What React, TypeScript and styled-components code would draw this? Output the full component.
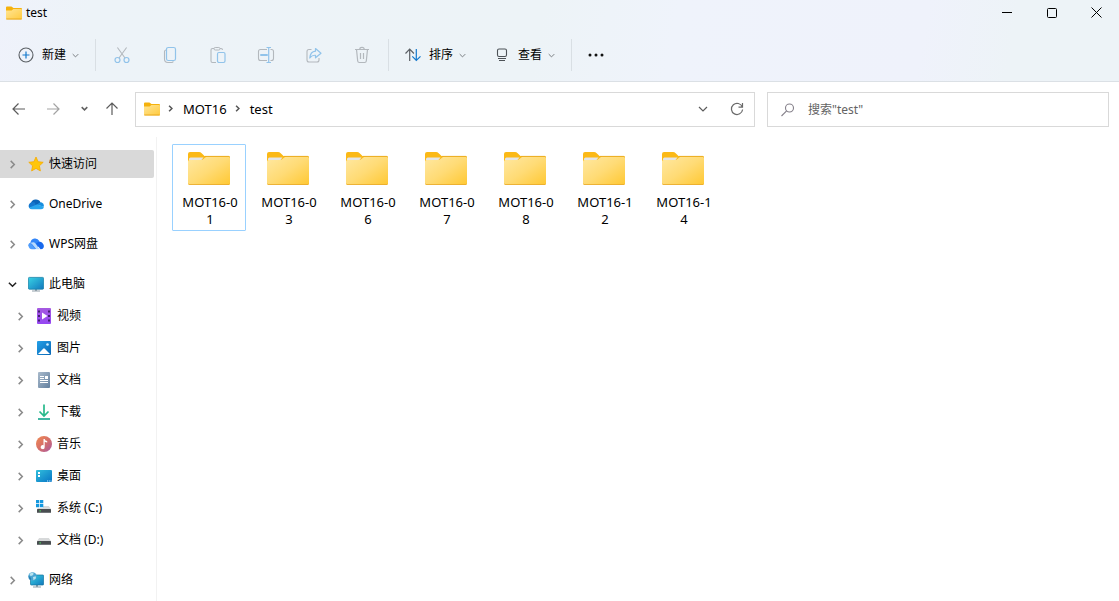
import React from "react";
import styled, { createGlobalStyle, css } from "styled-components";

const GlobalStyle = createGlobalStyle`
  * { box-sizing: border-box; }
  body {
    margin: 0;
    background: #fff;
    color: #000;
    font: 12px/16px "Noto Sans", "Noto Sans CJK SC", sans-serif;
  }
  button, input { font: inherit; color: inherit; }
  svg { display: block; flex: none; }
`;

const Window = styled.div`
  display: flex;
  flex-direction: column;
  min-height: 100vh;
  background: #fff;
`;

const Header = styled.header`
  background: linear-gradient(100deg, #eff2fb 0, #edf3f8 8%, #edf3f7 48%, #eff3fb 60%, #eff2fb 82%, #edf3f7 90%);
  border-bottom: 1px solid #dbe0e5;
`;

const TitleBar = styled.div`
  display: flex;
  align-items: center;
  gap: 4px;
  height: 25px;
  padding-left: 6px;
`;

const Title = styled.h1`
  flex: 1;
  margin: 0;
  font-size: 12px;
  font-weight: 400;
`;

const PlainButton = styled.button`
  display: flex;
  align-items: center;
  justify-content: center;
  flex: none;
  padding: 0;
  border: 0;
  background: transparent;
`;

const WindowButton = styled(PlainButton)`
  width: 45px;
  height: 25px;
`;

const WindowControls = styled.div`
  display: flex;
`;

const Toolbar = styled.div`
  display: flex;
  align-items: center;
  height: 52px;
  margin-top: 4px;
  padding-left: 3px;
`;

const MenuButton = styled(PlainButton)`
  gap: 6px;
  height: 32px;
  padding: 0 14px;
`;

const MenuText = styled.span`
  margin-left: 2px;
`;

const ToolButton = styled(PlainButton)`
  width: 48px;
  height: 32px;
`;

const Divider = styled.span`
  width: 1px;
  height: 32px;
  margin: 0 2px;
  background: #d9dfe4;
`;

const NavRow = styled.div`
  display: flex;
  align-items: center;
  padding: 10px 10px 0 0;
`;

const NavButtons = styled.div`
  display: flex;
  width: 135px;
  padding: 0 0 2px 2px;
`;

const NavButton = styled(PlainButton)<{ $narrow?: boolean }>`
  width: ${(p) => (p.$narrow ? 28 : 34)}px;
  height: 32px;
`;

const box = css`
  display: flex;
  align-items: center;
  height: 35px;
  border: 1px solid #d9d9d9;
  background: #fff;
`;

const AddressBar = styled.nav`
  ${box}
  flex: 1;
  min-width: 0;
  padding: 0 1px 2px 8px;
`;

const Crumb = styled.a`
  color: #000;
  font-size: 13px;
  text-decoration: none;
`;

const CrumbArrow = styled.span`
  margin: 0 9px 0 7px;
`;

const AddressActions = styled.div`
  display: flex;
  gap: 2px;
  margin-left: auto;
`;

const AddressButton = styled(PlainButton)`
  width: 32px;
  height: 32px;
`;

const SearchBox = styled.label`
  ${box}
  gap: 12px;
  width: 342px;
  margin-left: 12px;
  padding: 0 12px;
`;

const SearchInput = styled.input`
  flex: 1;
  min-width: 0;
  padding: 0;
  border: 0;
  outline: 0;
  background: transparent;
  &::placeholder { color: #636363; opacity: 1; }
`;

const Body = styled.div`
  display: flex;
  flex: 1;
  margin-top: 10px;
`;

const Sidebar = styled.nav`
  width: 157px;
  padding: 13px 2px 5px 0;
  border-right: 1px solid #f2f2f2;
`;

const Tree = styled.ul`
  display: flex;
  flex-direction: column;
  gap: 12px;
  margin: 0;
  padding: 0;
  list-style: none;
`;

const SubTree = styled(Tree)`
  gap: 4px;
  margin-top: 4px;
`;

const TreeRow = styled(PlainButton)<{ $nested?: boolean; $selected?: boolean }>`
  justify-content: flex-start;
  width: 100%;
  height: 28px;
  padding-left: ${(p) => (p.$nested ? 16 : 8)}px;
  border-radius: 0 2px 2px 0;
  background: ${(p) => (p.$selected ? "#d9d9d9" : "transparent")};
  white-space: nowrap;
`;

const TreeIcon = styled.span`
  margin: 0 5px 0 11px;
`;

const Files = styled.main`
  display: flex;
  flex: 1;
  flex-wrap: wrap;
  align-content: flex-start;
  gap: 5px;
  padding: 7px 15px;
`;

const FileTile = styled(PlainButton)<{ $focused?: boolean }>`
  flex-direction: column;
  justify-content: flex-start;
  gap: 9px;
  width: 74px;
  height: 87px;
  padding-top: 7px;
  border: 1px solid ${(p) => (p.$focused ? "#99d1ff" : "transparent")};
  border-radius: 1px;
`;

const FileName = styled.span`
  width: 62px;
  padding-left: 2px;
  font-size: 13px;
  line-height: 17px;
  text-align: center;
  word-break: break-all;
`;

type Dir = "down" | "right";

function Chevron({ dir = "down", size = 7, color = "#7b7f83", width = 1 }: { dir?: Dir; size?: number; color?: string; width?: number }) {
  return (
    <svg width={size} height={size} viewBox="0 0 10 10" fill="none" stroke={color} strokeWidth={width * (10 / size)}>
      <path d={dir === "down" ? "M1 3l4 4 4-4" : "M3 1l4 4-4 4"} />
    </svg>
  );
}

function SmallFolder() {
  return (
    <svg width="16" height="14" viewBox="0 0 16 14">
      <defs>
        <linearGradient id="smallFolder" x1="0" y1="0" x2="1" y2="1">
          <stop offset="0" stopColor="#ffe596" /><stop offset="1" stopColor="#ffca3e" />
        </linearGradient>
      </defs>
      <path d="M0 1.5Q0 .5 1 .5h4.400L7.500 2H15q1 0 1 1v3H0z" fill="#f5b10c" />
      <path d="M0 4.600h5.600L7.400 3H15q1 0 1 1v8.400q0 1-1 1H1q-1 0-1-1z" fill="url(#smallFolder)" />
      <path d="M.3 13h15.400" stroke="#e6a51c" strokeWidth=".9" />
    </svg>
  );
}

function LargeFolder() {
  return (
    <svg width="42" height="33" viewBox="0.5 0.5 42 33">
      <defs>
        <linearGradient id="largeFolder" x1="0" y1="0" x2="1" y2="1">
          <stop offset="0" stopColor="#ffe8a2" /><stop offset=".5" stopColor="#ffdb75" /><stop offset="1" stopColor="#ffc832" />
        </linearGradient>
      </defs>
      <path d="M.5 2.500Q.5.500 2.500.500h9q1.500 0 2.700 1.200L17 4.500h24q1.500 0 1.500 1.500v6H.5z" fill="#fbb917" />
      <path d="M1.500 7.500q0-1.500 1.500-1.500h13l-2 2.500H1.500z" fill="#e4e5e6" />
      <path d="M.5 10q0-1.500 1.500-1.500h11.500q1.500 0 2.500-1l1.400-1.300q1-.9 2.600-.9h21q1.500 0 1.500 1.500V32q0 1.500-1.500 1.500H2Q.5 33.500.5 32z" fill="url(#largeFolder)" />
      <path d="M1 32.500q.4.700 1.400.7h38.200q1 0 1.400-.7" fill="none" stroke="#e9aa2c" />
      <path d="M17.500 4.900H41q1 0 1.300.8" fill="none" stroke="#e9ab24" strokeWidth=".9" />
    </svg>
  );
}

const GREY = "#b3b8bd";
const BLUE = "#91c3ea";

const toolIcons: Record<string, React.ReactNode> = {
  剪切: (
    <svg width="16" height="18" viewBox="0 0 16 18" fill="none">
      <path d="M3.400 1.500l7.800 10.700M12.600 1.500L4.800 12.200" stroke={GREY} strokeWidth="1.100" />
      <circle cx="3.500" cy="14" r="2.500" stroke={BLUE} strokeWidth="1.200" />
      <circle cx="12.500" cy="14" r="2.500" stroke={BLUE} strokeWidth="1.200" />
    </svg>
  ),
  复制: (
    <svg width="16" height="18" viewBox="0 0 16 18" fill="none">
      <path d="M4 4q-1.500.2-1.500 1.600V13q0 3.500 3.500 3.500h3.500q1.500 0 1.800-1.200" stroke={GREY} strokeWidth="1.100" />
      <rect x="4.500" y="1.500" width="9" height="13" rx="1.800" stroke={BLUE} strokeWidth="1.200" />
    </svg>
  ),
  粘贴: (
    <svg width="16" height="18" viewBox="0 0 16 18" fill="none">
      <path d="M6 16.500H2.500q-1.500 0-1.500-1.500V4q0-1.500 1.500-1.500H4M10 2.500h1q1.500 0 1.500 1.500" stroke={GREY} strokeWidth="1.100" />
      <rect x="4" y="1.500" width="6" height="2.500" rx="1.200" stroke={GREY} />
      <rect x="7.500" y="6.500" width="7.500" height="10" rx="1.400" stroke={BLUE} strokeWidth="1.200" />
    </svg>
  ),
  重命名: (
    <svg width="18" height="18" viewBox="0 0 18 18" fill="none">
      <path d="M10 3.500H3.500q-2 0-2 2v7q0 2 2 2H10M13.500 3.500h1q2 0 2 2v7q0 2-2 2h-1" stroke={GREY} strokeWidth="1.100" />
      <path d="M9.500 1.500h4.500M9.500 16.500h4.500M11.700 1.500v15" stroke={BLUE} strokeWidth="1.200" />
      <path d="M4 9h6" stroke={BLUE} strokeWidth="2" strokeLinecap="round" />
    </svg>
  ),
  共享: (
    <svg width="18" height="18" viewBox="0 0 18 18" fill="none">
      <path d="M6.500 3.500H4q-2 0-2 2V14q0 2 2 2h8q2 0 2-2v-2" stroke={GREY} strokeWidth="1.100" />
      <path d="M10.500 2.500l5.500 4.700-5.500 4.600V9.300Q7 9 4.800 12 5.300 5.700 10.500 5.200z" stroke={BLUE} strokeWidth="1.200" strokeLinejoin="round" />
    </svg>
  ),
  删除: (
    <svg width="16" height="18" viewBox="0 0 16 18" fill="none" stroke={GREY} strokeWidth="1.200">
      <path d="M1 3.500h14M5.800 3.300q0-2 2.200-2t2.200 2M2.500 3.500l1.200 11.500q.2 1.500 1.600 1.500h5.400q1.400 0 1.600-1.500l1.200-11.500M6.500 7v6M9.500 7v6" />
    </svg>
  ),
};

const StarIcon = () => (
  <svg width="16" height="16" viewBox="0 0 16 16">
    <path d="M8 1l2.100 4.700 5.100.6-3.800 3.500 1 5.100L8 12.400l-4.400 2.500 1-5.100L.8 6.300l5.100-.6z" fill="#ffc60a" stroke="#f6a900" strokeWidth=".8" strokeLinejoin="round" />
  </svg>
);
const OneDriveIcon = () => (
  <svg width="16" height="16" viewBox="0 0 16 16">
    <path d="M3 7a5 4.500 0 0 1 9.500-.6L8 10z" fill="#0a64b8" />
    <path d="M3.600 6.200A4 4 0 0 0 1.200 12L8 10l-1-3.200q-1.500-1-3.400-.6z" fill="#1477cf" />
    <path d="M8.500 9l3.800-2.700a3.600 3.600 0 0 1 3.500 4.200z" fill="#168dde" />
    <path d="M1 11.800L8.700 8.500l7.100 2.100Q16 13 13 13.300H4q-2 0-3-1.500z" fill="#28a5ed" />
  </svg>
);
const WpsIcon = () => (
  <svg width="16" height="16" viewBox="0 0 16 16">
    <path d="M2.500 6.500A4.700 4.700 0 0 1 11.300 5l1 4L8 13H4L.5 9.500q0-2 2-3z" fill="#3185f8" />
    <path d="M4 6.500q2-1 3.500 1l4 5.800H8.300L4.200 8.200Q3 7 1.500 7.300 2.500 6.500 4 6.500z" fill="#b8dafd" />
    <path d="M.4 9.500q0-2.700 2.300-2.300L7.500 13.300H4Q.8 13 .4 9.500z" fill="#4f9dfb" />
    <path d="M8 7.500q3.500-3 6.200-.8 2.500 2.500 1.300 5-.8 1.600-3 1.600z" fill="#1769ed" />
  </svg>
);
const PcIcon = () => (
  <svg width="16" height="16" viewBox="0 0 16 16">
    <defs><linearGradient id="pc" x1="0" y1="0" x2="1" y2="1"><stop stopColor="#38d2e4" /><stop offset="1" stopColor="#1277bd" /></linearGradient></defs>
    <path d="M7 12h2v3H7zM4 14.500h8v1H4z" fill="#91a0aa" />
    <rect x=".4" y="1.400" width="15.200" height="11.800" rx="1" fill="url(#pc)" stroke="#1b83a8" strokeWidth=".8" />
  </svg>
);
const VideoIcon = () => (
  <svg width="16" height="16" viewBox="0 0 16 16">
    <defs><linearGradient id="video" x1="0" y1="0" x2="0" y2="1"><stop stopColor="#a55ae0" /><stop offset="1" stopColor="#9547f2" /></linearGradient></defs>
    <rect x="1" width="14" height="16" rx="1" fill="url(#video)" />
    <path d="M2 2.500h2v2H2zM2 7h2v2H2zM2 11.500h2v2H2zM12 2.500h2v2h-2zM12 7h2v2h-2zM12 11.500h2v2h-2z" fill="#43206e" />
    <path d="M6 4.500l5.500 3.500L6 11.500z" fill="#fff" />
  </svg>
);
const PictureIcon = () => (
  <svg width="16" height="16" viewBox="0 0 16 16">
    <defs><linearGradient id="pic" x1="0" y1="0" x2="1" y2="1"><stop stopColor="#23a0e8" /><stop offset="1" stopColor="#0967b5" /></linearGradient></defs>
    <rect x="1" y="1" width="14" height="14" rx="1" fill="url(#pic)" />
    <path d="M2 14l5.200-5.300q.8-.8 1.600 0L14 14z" fill="#fff" />
    <circle cx="11.500" cy="4.500" r="1.300" fill="#cdeeff" />
  </svg>
);
const DocumentIcon = () => (
  <svg width="16" height="16" viewBox="0 0 16 16">
    <defs><linearGradient id="doc" x1="0" y1="0" x2="1" y2="1"><stop stopColor="#aabbcc" /><stop offset="1" stopColor="#627f9f" /></linearGradient></defs>
    <rect x="2" y="0" width="12" height="16" rx="1" fill="url(#doc)" />
    <path d="M4 4.500h4M4 6.500h4M4 8.500h8M4 10.500h8" stroke="#fff" />
    <path d="M9 4h3v3H9z" fill="#fff" />
  </svg>
);
const DownloadIcon = () => (
  <svg width="16" height="16" viewBox="0 0 16 16" fill="none">
    <path d="M8 .5v11M3.500 7.500L8 12l4.500-4.500" stroke="#27b98b" strokeWidth="1.700" />
    <path d="M2 15h12" stroke="#12a68c" strokeWidth="1.600" />
  </svg>
);
const MusicIcon = () => (
  <svg width="16" height="16" viewBox="0 0 16 16">
    <defs><linearGradient id="music" x1="0" y1="0" x2="1" y2="1"><stop stopColor="#f08a52" /><stop offset=".5" stopColor="#d66f68" /><stop offset="1" stopColor="#a859a5" /></linearGradient></defs>
    <circle cx="8" cy="8" r="8" fill="url(#music)" />
    <path d="M7.500 3h1.200q.3 1.800 2.500 2v1.500q-1.500 0-2.500-.7v5.400a2 2 0 1 1-1.200-1.900z" fill="#fff" />
  </svg>
);
const DesktopIcon = () => (
  <svg width="16" height="16" viewBox="0 0 16 16">
    <defs><linearGradient id="desktop" x1="0" y1="0" x2="1" y2="1"><stop stopColor="#31bfdc" /><stop offset="1" stopColor="#0875c5" /></linearGradient></defs>
    <rect y="2" width="16" height="12" rx="1" fill="url(#desktop)" />
    <path d="M2 4h2v2H2zM2 7h2v2H2z" fill="#fff" />
    <path d="M11 12.500h1v1h-1zM12.800 12.500h1v1h-1zM14.500 12.500h1v1h-1z" fill="#bfe8ff" />
  </svg>
);
const DriveIcon = ({ system }: { system?: boolean }) => (
  <svg width="16" height="16" viewBox="0 0 16 16">
    <path d={system ? "M7 6h5.800L15 9H1l1-1h5z" : "M3.200 6h9.600L15 9H1z"} fill="#d7d9da" />
    <rect x="1" y="9" width="14" height="4" rx=".5" fill="#494d50" />
    <path d="M1 12.500h14" stroke="#83888b" strokeWidth=".7" />
    <path d="M3.500 10.300h1.300v1.300H3.500z" fill="#50db62" />
    {system && <path d="M0 0h3.300v3.300H0zM4 0h3.300v3.300H4zM0 4h3.300v3.300H0zM4 4h3.300v3.300H4z" fill="#1598df" />}
  </svg>
);
const NetworkIcon = () => (
  <svg width="16" height="16" viewBox="0 0 16 16">
    <path d="M8 12h2v3H8zM5 14.500h8v1H5z" fill="#8ea0ab" />
    <rect x="2.500" y="3" width="13.100" height="10" rx=".7" fill="url(#pc)" stroke="#15729c" strokeWidth=".7" />
    <circle cx="4.500" cy="4.500" r="4.300" fill="#4ba5d2" />
    <path d="M1.500 2q2-1.700 4-1L5.200 3 3 4 2 3.500zM5 5l2.700-.7.3 2-2.500 2z" fill="#b8e3ef" />
    <path d="M.8 4q1.500.5 2.400 2.500L3 8.200Q.5 7 .8 4z" fill="#287cb1" />
  </svg>
);

interface Place { name: string; icon: React.ReactNode; selected?: boolean; children?: Place[] }

const places: Place[] = [
  { name: "快速访问", icon: <StarIcon />, selected: true },
  { name: "OneDrive", icon: <OneDriveIcon /> },
  { name: "WPS网盘", icon: <WpsIcon /> },
  {
    name: "此电脑",
    icon: <PcIcon />,
    children: [
      { name: "视频", icon: <VideoIcon /> },
      { name: "图片", icon: <PictureIcon /> },
      { name: "文档", icon: <DocumentIcon /> },
      { name: "下载", icon: <DownloadIcon /> },
      { name: "音乐", icon: <MusicIcon /> },
      { name: "桌面", icon: <DesktopIcon /> },
      { name: "系统 (C:)", icon: <DriveIcon system /> },
      { name: "文档 (D:)", icon: <DriveIcon /> },
    ],
  },
  { name: "网络", icon: <NetworkIcon /> },
];

const folders = ["MOT16-01", "MOT16-03", "MOT16-06", "MOT16-07", "MOT16-08", "MOT16-12", "MOT16-14"];

function PlaceItem({ place, nested }: { place: Place; nested?: boolean }) {
  return (
    <li>
      <TreeRow $nested={nested} $selected={place.selected} aria-expanded={!!place.children}>
        <Chevron dir={place.children ? "down" : "right"} size={9} width={1.5} color={place.children ? "#222" : "#8a8a8a"} />
        <TreeIcon>{place.icon}</TreeIcon>
        {place.name}
      </TreeRow>
      {place.children && (
        <SubTree>
          {place.children.map((child) => <PlaceItem key={child.name} place={child} nested />)}
        </SubTree>
      )}
    </li>
  );
}

const Arrow = ({ d, color = "#5c5c5c" }: { d: string; color?: string }) => (
  <svg width="14" height="14" viewBox="0 0 14 14" fill="none" stroke={color} strokeWidth="1.200"><path d={d} /></svg>
);

export default function App() {
  return (
    <Window>
      <GlobalStyle />
      <Header>
        <TitleBar>
          <SmallFolder />
          <Title>test</Title>
          <WindowControls>
            <WindowButton aria-label="最小化">
              <svg width="10" height="10" stroke="#000"><path d="M0 4.500h10" /></svg>
            </WindowButton>
            <WindowButton aria-label="最大化">
              <svg width="10" height="10" fill="none" stroke="#000"><rect x=".5" y=".5" width="9" height="9" rx="1" /></svg>
            </WindowButton>
            <WindowButton aria-label="关闭">
              <svg width="11" height="11" fill="none" stroke="#000"><path d="M.5.500l10 10M10.500.500l-10 10" /></svg>
            </WindowButton>
          </WindowControls>
        </TitleBar>
        <Toolbar role="toolbar">
          <MenuButton>
            <svg width="17" height="16" viewBox="0 0 17 16" fill="none">
              <circle cx="9" cy="8" r="7" stroke="#5b6065" strokeWidth="1.100" />
              <path d="M9 4.500v7M5.500 8h7" stroke="#1479cc" strokeWidth="1.200" />
            </svg>
            <MenuText>新建</MenuText>
            <Chevron />
          </MenuButton>
          <Divider />
          {Object.entries(toolIcons).map(([name, icon]) => (
            <ToolButton key={name} aria-label={name}>{icon}</ToolButton>
          ))}
          <Divider />
          <MenuButton>
            <svg width="16" height="16" viewBox="0 0 16 16" fill="none" strokeWidth="1.200">
              <path d="M4.700 14V2.500M.5 6.500l4.200-4.300 4.200 4.300" stroke="#5b6065" />
              <path d="M11.300 2v11.500M7.300 9.300l4 4.200 4.200-4.200" stroke="#1479cc" />
            </svg>
            <MenuText>排序</MenuText>
            <Chevron />
          </MenuButton>
          <MenuButton>
            <svg width="16" height="16" viewBox="0 0 16 16" fill="none" stroke="#4d5257" strokeWidth="1.100">
              <rect x="3.500" y="2" width="9" height="7.500" rx="1.500" />
              <path d="M4 11.500h8M5 13.500h6" />
            </svg>
            <MenuText>查看</MenuText>
            <Chevron />
          </MenuButton>
          <Divider />
          <MenuButton aria-label="更多">
            <svg width="16" height="4" fill="#111"><circle cx="2" cy="2" r="1.500" /><circle cx="8" cy="2" r="1.500" /><circle cx="14" cy="2" r="1.500" /></svg>
          </MenuButton>
        </Toolbar>
      </Header>
      <NavRow>
        <NavButtons>
          <NavButton aria-label="后退"><Arrow d="M13 7H1M6.500 1.500L1 7l5.500 5.500" /></NavButton>
          <NavButton aria-label="前进"><Arrow d="M1 7h12M7.500 1.500L13 7l-5.500 5.500" color="#a3a3a3" /></NavButton>
          <NavButton $narrow aria-label="最近位置"><Chevron size={7} width={1.5} color="#606060" /></NavButton>
          <NavButton $narrow aria-label="向上"><Arrow d="M7 13V1M1.500 6.500L7 1l5.500 5.500" /></NavButton>
        </NavButtons>
        <AddressBar aria-label="地址">
          <SmallFolder />
          <CrumbArrow><Chevron dir="right" size={7} width={1.5} color="#555" /></CrumbArrow>
          <Crumb href="#mot16">MOT16</Crumb>
          <CrumbArrow><Chevron dir="right" size={7} width={1.5} color="#555" /></CrumbArrow>
          <Crumb href="#test">test</Crumb>
          <AddressActions>
            <AddressButton aria-label="展开"><Chevron size={10} color="#5c5c5c" width={1.2} /></AddressButton>
            <AddressButton aria-label="刷新">
              <svg width="14" height="14" viewBox="0 0 14 14" fill="none" stroke="#6a6a6a" strokeWidth="1.200">
                <path d="M12.300 5A5.600 5.600 0 1 0 12.600 7.500M12.500 1v4.200H8.500" />
              </svg>
            </AddressButton>
          </AddressActions>
        </AddressBar>
        <SearchBox>
          <svg width="16" height="14" viewBox="0 0 16 14" fill="none" stroke="#85808a" strokeWidth="1.100">
            <circle cx="9.500" cy="5" r="4" /><path d="M6.600 7.900L1.500 13" />
          </svg>
          <SearchInput type="search" aria-label="搜索" placeholder={'搜索"test"'} />
        </SearchBox>
      </NavRow>
      <Body>
        <Sidebar aria-label="位置">
          <Tree>{places.map((place) => <PlaceItem key={place.name} place={place} />)}</Tree>
        </Sidebar>
        <Files>
          {folders.map((name, index) => (
            <FileTile key={name} $focused={index === 0}>
              <LargeFolder />
              <FileName>{name}</FileName>
            </FileTile>
          ))}
        </Files>
      </Body>
    </Window>
  );
}
